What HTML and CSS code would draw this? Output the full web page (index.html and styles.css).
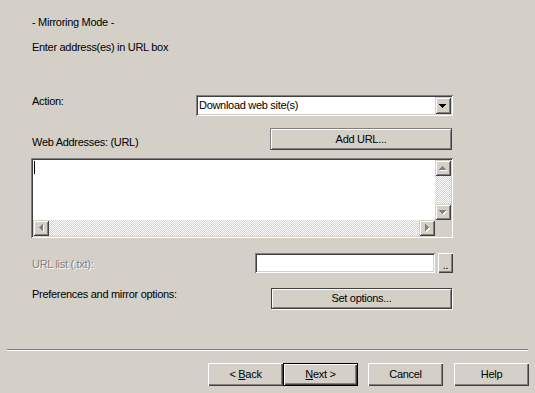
FILE: index.html
```html
<!DOCTYPE html>
<html>

<head>
    <meta name="viewport" content="width=device-width, initial-scale=1">
    <link rel="stylesheet" href="styles.css">
</head>

<body>

    <div class="wizard">

        <div class="content">
            <p class="title">- Mirroring Mode -</p>
            <p class="hint">Enter address(es) in URL box</p>

            <!-- Action combo -->
            <div class="row action">
                <span class="label">Action:</span>
                <div class="combo">
                    <span class="combo-text">Download web site(s)</span>
                    <span class="drop">
                        <svg width="16" height="17" viewBox="0 0 16 17">
                            <path d="M4 7h7v1H4zM5 8h5v1H5zM6 9h3v1H6zM7 10h1v1H7z" fill="#000"/>
                        </svg>
                    </span>
                </div>
            </div>

            <!-- Web addresses -->
            <div class="row web">
                <span class="label">Web Addresses: (URL)</span>
                <button class="btn etched">Add URL...</button>
            </div>

            <div class="urlbox">
                <div class="text-area"><span class="caret"></span></div>
                <div class="vscroll">
                    <span class="sb-btn">
                        <svg width="16" height="16" viewBox="0 0 16 16">
                            <path d="M8 7h1v1H8zM7 8h3v1H7zM6 9h5v1H6zM5 10h7v1H5z" fill="#fff"/>
                            <path d="M7 6h1v1H7zM6 7h3v1H6zM5 8h5v1H5zM4 9h7v1H4z" fill="#808080"/>
                        </svg>
                    </span>
                    <span class="track"></span>
                    <span class="sb-btn">
                        <svg width="16" height="16" viewBox="0 0 16 16">
                            <path d="M5 7h7v1H5zM6 8h5v1H6zM7 9h3v1H7zM8 10h1v1H8z" fill="#fff"/>
                            <path d="M4 6h7v1H4zM5 7h5v1H5zM6 8h3v1H6zM7 9h1v1H7z" fill="#808080"/>
                        </svg>
                    </span>
                </div>
                <div class="hscroll">
                    <span class="sb-btn">
                        <svg width="16" height="16" viewBox="0 0 16 16">
                            <path d="M10 5h1v7h-1zM9 6h1v5H9zM8 7h1v3H8zM7 8h1v1H7z" fill="#fff"/>
                            <path d="M9 4h1v7H9zM8 5h1v5H8zM7 6h1v3H7zM6 7h1v1H6z" fill="#808080"/>
                        </svg>
                    </span>
                    <span class="track"></span>
                    <span class="sb-btn">
                        <svg width="16" height="16" viewBox="0 0 16 16">
                            <path d="M7 5h1v7H7zM8 6h1v5H8zM9 7h1v3H9zM10 8h1v1h-1z" fill="#fff"/>
                            <path d="M6 4h1v7H6zM7 5h1v5H7zM8 6h1v3H8zM9 7h1v1H9z" fill="#808080"/>
                        </svg>
                    </span>
                </div>
                <div class="corner"></div>
            </div>

            <!-- URL list file -->
            <div class="row list">
                <span class="label disabled">URL list (.txt):</span>
                <div class="field"></div>
                <button class="btn small">..</button>
            </div>

            <!-- Preferences -->
            <div class="row prefs">
                <span class="label">Preferences and mirror options:</span>
                <button class="btn framed">Set options...</button>
            </div>
        </div>

        <div class="separator"></div>

        <div class="buttons">
            <button class="btn push">&lt; <u>B</u>ack</button>
            <button class="btn push default"><u>N</u>ext &gt;</button>
            <button class="btn push cancel">Cancel</button>
            <button class="btn push help">Help</button>
        </div>

    </div>

</body>

</html>
```

FILE: styles.css
```css
html,
body {
    margin: 0;
    padding: 0;
    background-color: #d4d0c8;
    font-family: "Liberation Sans", Arial, sans-serif;
    font-size: 11px;
    line-height: 13px;
    letter-spacing: -0.3px;
    color: #000;
}

.wizard {
    width: 535px;
    height: 393px;
    overflow: hidden;
}

.content {
    margin-left: 31px;
    width: 422px;
}

.title,
.hint {
    margin: 0;
    padding-left: 1px;
}

.title {
    padding-top: 16px;
}

.hint {
    margin-top: 12px;
}

.row {
    display: flex;
    align-items: flex-start;
}

.label {
    padding-left: 1px;
    flex: 1;
}

.action {
    margin-top: 41px;
    height: 21px;
}

.web {
    margin-top: 12px;
    height: 22px;
}

.web .label {
    padding-top: 8px;
}

.list {
    margin-top: 15px;
    height: 20px;
}

.list .label {
    padding-top: 5px;
}

.prefs {
    margin-top: 15px;
    height: 22px;
}

.disabled {
    color: #808080;
    text-shadow: 1px 1px 0 #fff;
}

/* sunken white boxes */
.combo,
.field,
.urlbox {
    background-color: #fff;
    box-shadow: inset 1px 1px #808080, inset -1px -1px #fff, inset 2px 2px #404040, inset -2px -2px #d4d0c8;
    box-sizing: border-box;
}

.combo {
    width: 257px;
    height: 21px;
    display: flex;
    align-items: center;
    padding: 2px;
}

.combo-text {
    flex: 1;
    padding-left: 1px;
}

.drop,
.sb-btn {
    display: block;
    background-color: #d4d0c8;
    box-shadow: inset 1px 1px #d4d0c8, inset -1px -1px #404040, inset 2px 2px #fff, inset -2px -2px #808080;
}

.drop {
    width: 16px;
    height: 17px;
}

.sb-btn {
    width: 16px;
    height: 16px;
    flex: none;
}

.drop svg,
.sb-btn svg {
    display: block;
    shape-rendering: crispEdges;
}

.urlbox {
    margin-top: 8px;
    width: 422px;
    height: 80px;
    padding: 2px;
    display: grid;
    grid-template-columns: 1fr 16px;
    grid-template-rows: 1fr 16px;
}

.text-area {
    padding: 1px 0 0 1px;
}

.caret {
    display: block;
    width: 1px;
    height: 13px;
    background-color: #000;
}

.vscroll {
    display: flex;
    flex-direction: column;
}

.hscroll {
    display: flex;
}

.track {
    flex: 1;
    background-image: repeating-conic-gradient(#fff 0 25%, #d4d0c8 0 50%);
    background-size: 2px 2px;
}

.corner {
    background-color: #d4d0c8;
}

.field {
    width: 180px;
    height: 20px;
}

/* buttons */
.btn {
    font-family: inherit;
    font-size: 11px;
    line-height: 13px;
    letter-spacing: -0.3px;
    color: #000;
    background-color: #d4d0c8;
    border: none;
    padding: 0;
    margin: 0;
    box-sizing: border-box;
    text-align: center;
    cursor: pointer;
}

.etched {
    width: 182px;
    height: 22px;
    margin-right: 1px;
    border: 1px solid;
    border-color: #808080 #404040 #404040 #808080;
    box-shadow: inset 1px 1px #fff, inset -1px -1px #808080;
}

.framed {
    width: 181px;
    height: 21px;
    margin-right: 1px;
    border: 1px solid #404040;
    box-shadow: 1px 1px 0 #fff, inset 1px 1px #fff, inset -1px -1px #808080;
}

.small {
    width: 15px;
    height: 20px;
    margin-left: 3px;
    padding-top: 4px;
    box-shadow: inset 1px 1px #fff, inset -1px -1px #404040, inset -2px -2px #808080;
}

.separator {
    margin: 39px 0 0 7px;
    width: 521px;
    height: 0;
    border-top: 1px solid #808080;
    border-bottom: 1px solid #fff;
}

.buttons {
    display: flex;
    margin-top: 12px;
    padding-left: 208px;
}

.push {
    width: 75px;
    height: 23px;
    box-shadow: inset 1px 1px #fff, inset -1px -1px #404040, inset -2px -2px #808080;
}

.default {
    border: 1px solid #000;
}

.cancel {
    margin-left: 10px;
}

.help {
    margin-left: 11px;
}

u {
    text-decoration: underline;
    text-underline-offset: 1px;
}
```
